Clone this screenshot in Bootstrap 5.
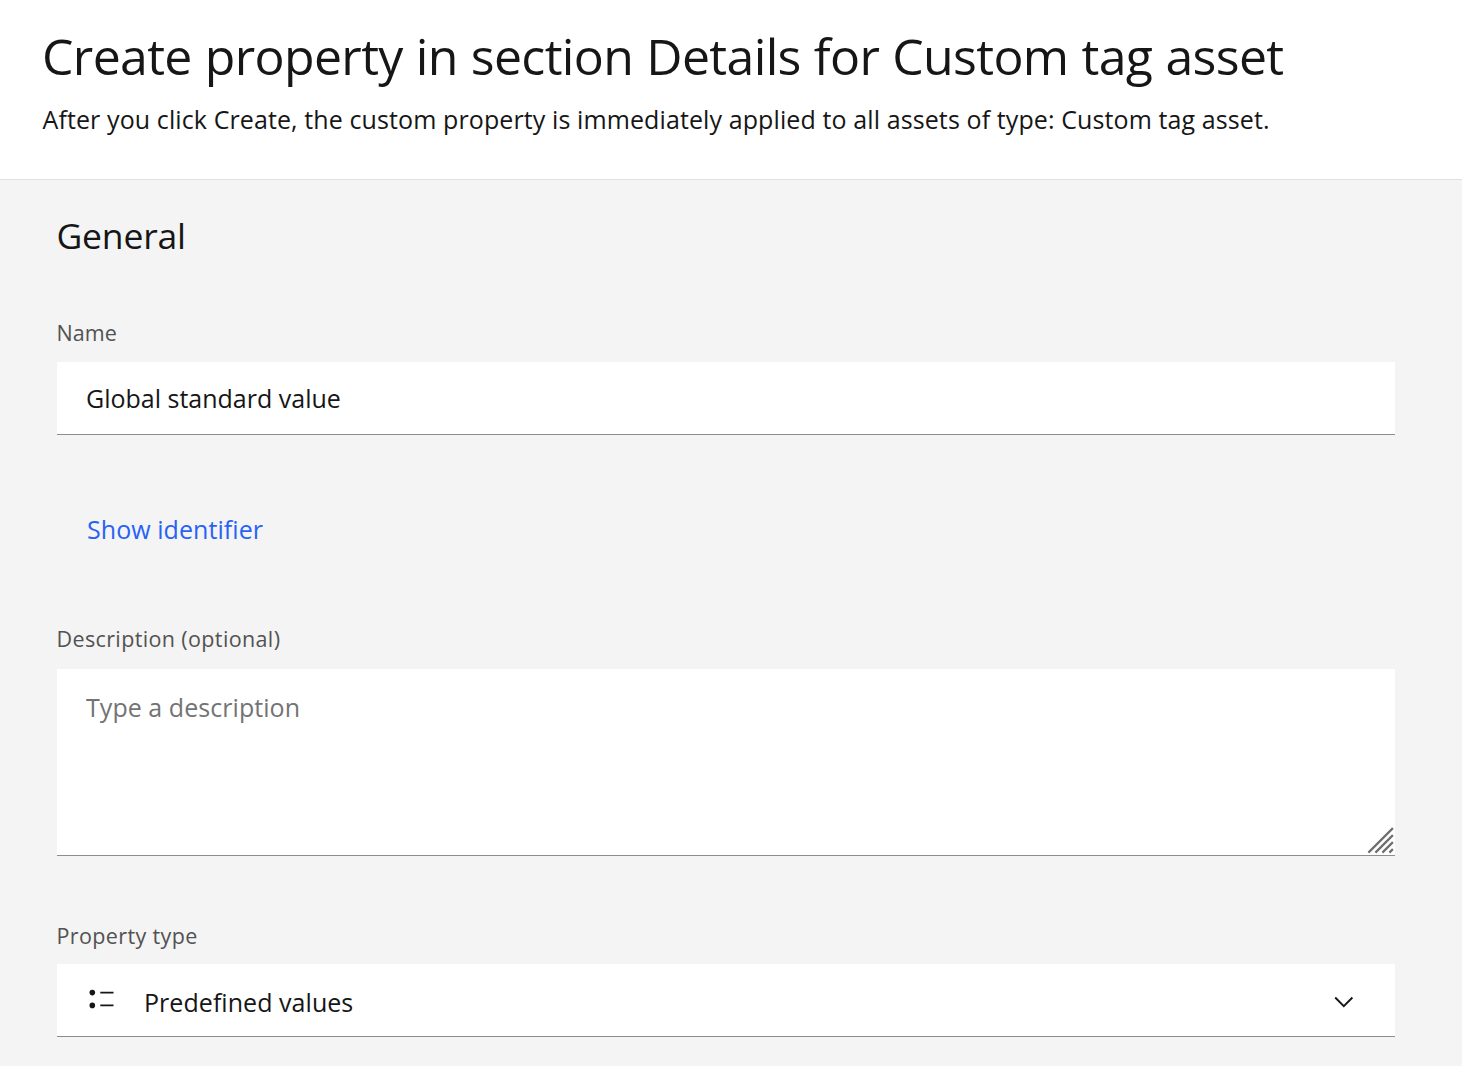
<!DOCTYPE html>
<html lang="en">
<head>
<meta charset="utf-8">
<meta name="viewport" content="width=device-width, initial-scale=1">
<title>Create property</title>
<link href="https://cdn.jsdelivr.net/npm/bootstrap@5.3.0/dist/css/bootstrap.min.css" rel="stylesheet">
<style>
body{font-family:"Open Sans",sans-serif;background:#f4f4f4;color:#161616;font-size:25px;line-height:34px;height:1066px;overflow:hidden}
.page-head{height:180px;padding:26px 41px 0;border-bottom:1px solid #e0e0e0}
.page-title{font-size:50px;line-height:60px;font-weight:400;letter-spacing:-.65px;word-spacing:.7px;margin:0 0 16px 1px;white-space:nowrap}
.page-sub{letter-spacing:.105px;padding-left:1.5px;white-space:nowrap}
.form-area{padding:33px 67px 0 57px}
.section-title{font-size:35.5px;line-height:44px;font-weight:400;letter-spacing:-.2px;margin:0 0 62px -.5px}
.form-label{display:block;font-size:21.5px;line-height:28px;color:#525252;letter-spacing:.37px;margin:0 0 16px -.5px}
.label-name{letter-spacing:.1px;margin-bottom:15px}
.label-type{margin-bottom:14px}
.form-control,.form-control:focus{font-size:25px;line-height:34px;color:#161616;background:#fff;border:0;border-bottom:1px solid #8d8d8d;border-radius:0;box-shadow:none;letter-spacing:0;padding:0 29px}
.name-input{height:73px}
.show-btn,.show-btn:hover{font-size:25px;line-height:34px;color:#2862f4;letter-spacing:.06px;border:0;border-radius:0;padding:0;margin:77px 0 79px 30px}
.desc-input.form-control{display:block;height:187px;padding:21px 29px;resize:none;letter-spacing:.05px}
.desc-input::placeholder{color:#737373;opacity:1}
.resize-grip{position:absolute;right:0;bottom:0}
.desc-box{margin-bottom:66px}
.type-select.btn{height:73px;background:#fff;border:0;border-bottom:1px solid #8d8d8d;border-radius:0;font-size:25px;line-height:34px;color:#161616;letter-spacing:.05px;padding:3px 40px 0 30px}
.type-icon{margin:-6px 27px 0 0}
</style>
</head>
<body>
<header class="page-head bg-white">
  <h1 class="page-title">Create property in section Details for Custom tag asset</h1>
  <p class="page-sub mb-0">After you click Create, the custom property is immediately applied to all assets of type: Custom tag asset.</p>
</header>
<main class="form-area">
  <h2 class="section-title">General</h2>
  <form>
    <label class="form-label label-name" for="propName">Name</label>
    <input class="form-control name-input" id="propName" type="text" value="Global standard value">
    <div class="d-flex"><button class="btn btn-link text-decoration-none show-btn" type="button">Show identifier</button></div>
    <label class="form-label" for="propDesc">Description (optional)</label>
    <div class="position-relative desc-box">
      <textarea class="form-control desc-input" id="propDesc" placeholder="Type a description"></textarea>
      <svg class="resize-grip" width="30" height="30" viewBox="0 0 30 30" stroke="#6f6f6f" stroke-width="2.2" fill="none" aria-hidden="true"><path d="M3.4 26.6 27.9 2.1M10.4 26.6 27.9 9.1M17.4 26.6 27.9 16.1M24.4 26.6 27.9 23.1"/></svg>
    </div>
    <label class="form-label label-type" for="propType">Property type</label>
    <button class="btn w-100 d-flex align-items-center text-start type-select" id="propType" type="button">
      <svg class="type-icon" width="30" height="22" viewBox="0 0 30 22" aria-hidden="true"><g fill="#161616"><circle cx="5.3" cy="4.6" r="2.8"/><circle cx="5.3" cy="17.4" r="2.8"/><path d="M13.3 3.7h13.2v1.8H13.3zM13.3 16.5h13.2v1.8H13.3z"/></g></svg>
      <span class="flex-grow-1">Predefined values</span>
      <svg width="22" height="14" viewBox="0 0 22 14" fill="none" stroke="#161616" stroke-width="1.9" aria-hidden="true"><path d="M2.2 2.5 10.8 11.1 19.4 2.5"/></svg>
    </button>
  </form>
</main>
<script src="https://cdn.jsdelivr.net/npm/bootstrap@5.3.0/dist/js/bootstrap.bundle.min.js"></script>
</body>
</html>
